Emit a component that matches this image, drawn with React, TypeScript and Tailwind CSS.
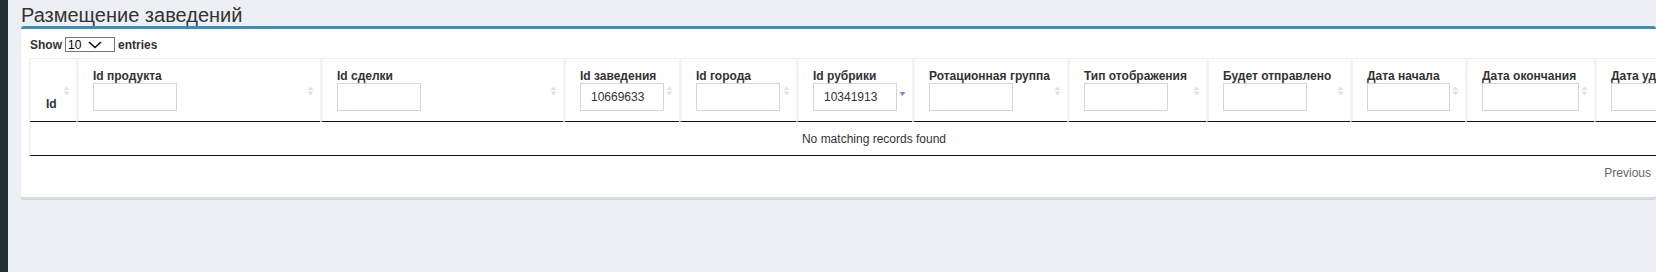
import React from 'react';

type Col = {
  label: string;
  width: number;
  input?: number;
  value?: string;
  sort?: 'both' | 'desc' | 'none';
};

const columns: Col[] = [
  { label: 'Id продукта', width: 244, input: 84 },
  { label: 'Id сделки', width: 243, input: 84 },
  { label: 'Id заведения', width: 116, input: 84, value: '10669633' },
  { label: 'Id города', width: 117, input: 84 },
  { label: 'Id рубрики', width: 116, input: 84, value: '10341913', sort: 'desc' },
  { label: 'Ротационная группа', width: 155, input: 84 },
  { label: 'Тип отображения', width: 139, input: 84 },
  { label: 'Будет отправлено', width: 144, input: 84 },
  { label: 'Дата начала', width: 115, input: 83 },
  { label: 'Дата окончания', width: 129, input: 97 },
  { label: 'Дата удаления', width: 123, input: 97, sort: 'none' },
];

function SortIcon({ kind }: { kind: 'both' | 'desc' }) {
  if (kind === 'desc') {
    return (
      <svg width="7" height="10" viewBox="0 0 7 10" className="absolute right-[6px] top-[28px]">
        <path d="M0.5 5 L6.5 5 L3.5 9 Z" fill="#8585d6" />
      </svg>
    );
  }
  return (
    <svg width="7" height="10" viewBox="0 0 7 10" className="absolute right-[6px] top-[27px]">
      <path d="M0.5 4 L6.5 4 L3.5 0.5 Z" fill="#e2e2e2" />
      <path d="M0.5 5.5 L6.5 5.5 L3.5 9.5 Z" fill="#e2e2e2" />
    </svg>
  );
}

export default function App() {
  const tableWidth = 47 + columns.reduce((s, c) => s + c.width, 0);

  return (
    <div className="flex w-[1656px] h-[272px] overflow-hidden bg-[#ecf0f5] font-['Liberation_Sans',Arial,sans-serif] text-[#333]">
      <div className="w-2 shrink-0 bg-[#222d32]" />
      <div className="flex-1 min-w-0 pl-[13px]">
        <h1 className="pt-1 text-[20px] leading-[22px] font-normal text-[#333] whitespace-nowrap">
          Размещение заведений
        </h1>
        <div className="h-[173px] rounded-[3px] border-t-[3px] border-[#3c8dbc] bg-white shadow-[0_1px_1px_rgba(0,0,0,0.12)] border-b-2 border-b-[#d8dce1] overflow-hidden">
          <div className="px-2 pt-2">
            <div className="flex items-center gap-[3px] text-[12px] font-bold leading-[14px] text-[#333]">
              <span className="ml-px">Show</span>
              <div className="flex items-center justify-between w-[50px] h-[15px] border border-[#767676] pl-[2px] pr-[12px] font-normal text-black">
                <span>10</span>
                <svg width="14" height="8" viewBox="0 0 14 8">
                  <path d="M1 1 L7 6.5 L13 1" fill="none" stroke="#111" strokeWidth="1.6" />
                </svg>
              </div>
              <span>entries</span>
            </div>

            <table
              className="mt-[6px] border-separate border-spacing-0 table-fixed text-[12px]"
              style={{ width: tableWidth }}
            >
              <colgroup>
                <col style={{ width: 47 }} />
                {columns.map((c) => (
                  <col key={c.label} style={{ width: c.width }} />
                ))}
              </colgroup>
              <thead>
                <tr>
                  <th className="relative h-[64px] border-t border-t-[#eeeeee] border-l-2 border-l-[#f3f3f3] border-b border-b-[#111] pl-[15px] pb-[10px] align-bottom text-left font-bold leading-[14px]">
                    Id
                    <SortIcon kind="both" />
                  </th>
                  {columns.map((c) => (
                    <th
                      key={c.label}
                      className="relative h-[64px] border-t border-t-[#eeeeee] border-l-[3px] border-l-[#f3f3f3] border-b border-b-[#111] pl-[14px] pt-[10px] align-top text-left font-bold leading-[14px] whitespace-nowrap"
                    >
                      <div>{c.label}</div>
                      <input
                        readOnly
                        value={c.value ?? ''}
                        style={{ width: c.input }}
                        className="block h-[28px] border border-[#d2d6de] pl-[10px] text-[12px] font-normal text-[#333] outline-none"
                      />
                      {c.sort === 'desc' ? (
                        <SortIcon kind="desc" />
                      ) : c.sort === 'none' ? null : (
                        <SortIcon kind="both" />
                      )}
                    </th>
                  ))}
                </tr>
              </thead>
              <tbody>
                <tr>
                  <td
                    colSpan={columns.length + 1}
                    className="h-[34px] border-l-2 border-l-[#f3f3f3] border-b border-b-[#111] text-center leading-[14px] text-[#333]"
                  >
                    No matching records found
                  </td>
                </tr>
              </tbody>
            </table>
          </div>
          <div className="flex justify-end pr-[5px] pt-[10px] text-[12px] leading-[14px] text-[#666]">
            Previous
          </div>
        </div>
      </div>
    </div>
  );
}
